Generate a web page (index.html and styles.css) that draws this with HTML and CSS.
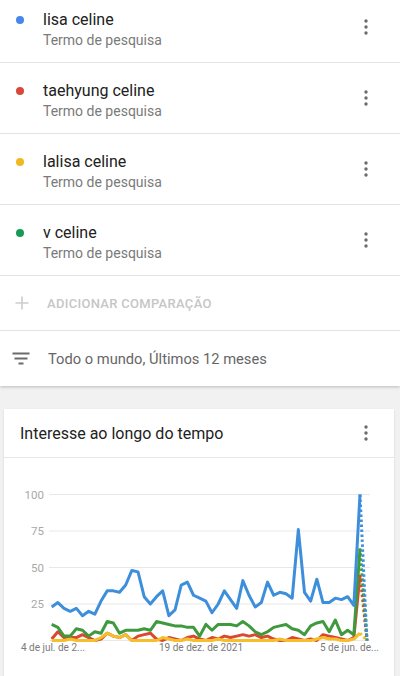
FILE: index.html
```html
<!DOCTYPE html>
<html lang="pt">
<head>
    <meta charset="UTF-8">
    <meta name="viewport" content="width=device-width, initial-scale=1.0">
    <title>Interesse ao longo do tempo</title>
    <link rel="stylesheet" href="styles.css">
</head>
<body>
    <div class="terms">
        <div class="term">
            <span class="dot dot-blue"></span>
            <div class="term-text">
                <div class="term-title">lisa celine</div>
                <div class="term-sub">Termo de pesquisa</div>
            </div>
            <svg class="kebab" width="24" height="24" viewBox="0 0 24 24"><circle cx="12" cy="6" r="1.7"/><circle cx="12" cy="12" r="1.7"/><circle cx="12" cy="18" r="1.7"/></svg>
        </div>
        <div class="term">
            <span class="dot dot-red"></span>
            <div class="term-text">
                <div class="term-title">taehyung celine</div>
                <div class="term-sub">Termo de pesquisa</div>
            </div>
            <svg class="kebab" width="24" height="24" viewBox="0 0 24 24"><circle cx="12" cy="6" r="1.7"/><circle cx="12" cy="12" r="1.7"/><circle cx="12" cy="18" r="1.7"/></svg>
        </div>
        <div class="term">
            <span class="dot dot-yellow"></span>
            <div class="term-text">
                <div class="term-title">lalisa celine</div>
                <div class="term-sub">Termo de pesquisa</div>
            </div>
            <svg class="kebab" width="24" height="24" viewBox="0 0 24 24"><circle cx="12" cy="6" r="1.7"/><circle cx="12" cy="12" r="1.7"/><circle cx="12" cy="18" r="1.7"/></svg>
        </div>
        <div class="term">
            <span class="dot dot-green"></span>
            <div class="term-text">
                <div class="term-title">v celine</div>
                <div class="term-sub">Termo de pesquisa</div>
            </div>
            <svg class="kebab" width="24" height="24" viewBox="0 0 24 24"><circle cx="12" cy="6" r="1.7"/><circle cx="12" cy="12" r="1.7"/><circle cx="12" cy="18" r="1.7"/></svg>
        </div>

        <div class="add-row">
            <svg class="plus" width="14" height="14" viewBox="0 0 14 14"><path d="M7 0.5v13M0.5 7h13"/></svg>
            <span>Adicionar comparação</span>
        </div>

        <div class="filter-row">
            <svg class="filter" width="18" height="13" viewBox="0 0 18 13"><path d="M0.5 1.5h17M2.5 6.5h13M6.5 11.5h5"/></svg>
            <span>Todo o mundo, Últimos 12 meses</span>
        </div>
    </div>

    <div class="card">
        <div class="card-head">
            <span>Interesse ao longo do tempo</span>
            <svg class="kebab" width="24" height="24" viewBox="0 0 24 24"><circle cx="12" cy="6" r="1.7"/><circle cx="12" cy="12" r="1.7"/><circle cx="12" cy="18" r="1.7"/></svg>
        </div>
        <!-- chart: x = week index, y = interest (0-100) -->
        <svg class="chart" width="390" height="220" viewBox="0 0 390 220">
            <g class="grid">
                <line x1="45" y1="36.5" x2="366" y2="36.5"/>
                <line x1="45" y1="73" x2="366" y2="73"/>
                <line x1="45" y1="109.5" x2="366" y2="109.5"/>
                <line x1="45" y1="146" x2="366" y2="146"/>
                <line x1="45" y1="182.5" x2="366" y2="182.5"/>
            </g>
            <g class="y-labels">
                <text x="40" y="40.5">100</text>
                <text x="40" y="77">75</text>
                <text x="40" y="113.5">50</text>
                <text x="40" y="150">25</text>
            </g>
            <g transform="translate(47.7 182.5) scale(6.166 -1.46)">
                <polyline class="line line-red" points="0,1 1,6 2,2 3,2 4,2 5,4 6,2 7,0 8,1 9,5 10,3 11,2 12,4 13,0 14,3 15,4 16,5 17,1 18,0 19,2 20,1 21,0 22,2 23,3 24,1 25,0 26,2 27,1 28,3 29,2 30,3 31,4 32,3 33,4 34,2 35,3 36,1 37,0 38,0 39,2 40,1 41,0 42,1 43,0 44,4 45,3 46,2 47,1 48,0 49,2 50,45"/>
                <polyline class="line line-yellow" points="0,0 1,0 2,0 3,1 4,0 5,0 6,0 7,0 8,2 9,5 10,3 11,2 12,4 13,0 14,0 15,0 16,0 17,0 18,2 19,1 20,0 21,0 22,1 23,0 24,0 25,0 26,0 27,1 28,0 29,0 30,0 31,0 32,0 33,0 34,0 35,0 36,0 37,1 38,0 39,0 40,0 41,0 42,0 43,1 44,2 45,1 46,1 47,0 48,0 49,1 50,5"/>
                <polyline class="line line-green" points="0,11 1,9 2,3 3,3 4,8 5,7 6,3 7,6 8,5 9,13 10,12 11,5 12,7 13,7 14,7 15,8 16,7 17,13 18,12 19,11 20,10 21,10 22,9 23,9 24,3 25,11 26,7 27,11 28,11 29,11 30,10 31,13 32,10 33,6 34,4 35,6 36,9 37,10 38,11 39,8 40,7 41,4 42,10 43,12 44,13 45,6 46,14 47,4 48,7 49,4 50,63"/>
                <polyline class="line line-blue" points="0,23 1,26 2,22 3,20 4,22 5,17 6,20 7,18 8,27 9,34 10,34 11,33 12,38 13,48 14,47 15,30 16,25 17,30 18,34 19,17 20,21 21,38 22,40 23,31 24,29 25,27 26,19 27,25 28,34 29,28 30,22 31,41 32,31 33,23 34,26 35,40 36,31 37,33 38,32 39,29 40,76 41,33 42,27 43,42 44,26 45,26 46,29 47,28 48,30 49,24 50,100"/>
            </g>
            <g class="partial">
                <line class="dash-yellow" x1="356" y1="175.2" x2="363" y2="182.5"/>
                <line class="dash-red" x1="356" y1="116.8" x2="363" y2="182.5"/>
                <line class="dash-green" x1="356" y1="90.5" x2="363" y2="182.5"/>
                <line class="dash-blue" x1="356" y1="36.5" x2="363" y2="182.5"/>
            </g>
            <g class="x-labels">
                <text x="17" y="192.5">4 de jul. de 2...</text>
                <text x="155" y="192.5">19 de dez. de 2021</text>
                <text x="316" y="192.5">5 de jun. de...</text>
            </g>
        </svg>
    </div>
</body>
</html>
```
FILE: styles.css
```css
body {
    margin: 0;
    font-family: Roboto, "Noto Sans", Arial, sans-serif;
    background-color: #f1f1f1;
    overflow: hidden;
}

.terms {
    margin-top: -8px;
    background-color: #fff;
    box-shadow: 0 1px 3px rgba(0, 0, 0, 0.22);
}

.term {
    display: flex;
    height: 70px;
    border-bottom: 1px solid #e3e3e3;
}

.dot {
    flex: none;
    width: 8px;
    height: 8px;
    margin: 24px 19px 0 16px;
    border-radius: 50%;
}

.dot-blue { background-color: #4687ea; }
.dot-red { background-color: #d9483a; }
.dot-yellow { background-color: #f3b821; }
.dot-green { background-color: #169b56; }

.term-text {
    padding-top: 18px;
}

.term-title {
    font-size: 16px;
    line-height: 20px;
    color: #212121;
}

.term-sub {
    font-size: 14px;
    line-height: 20px;
    color: #7a7a7a;
}

.kebab {
    flex: none;
    fill: #6b6b6b;
}

.term .kebab {
    align-self: center;
    margin: 0 22px 0 auto;
}

.add-row {
    display: flex;
    align-items: center;
    height: 54px;
    padding-left: 15px;
    border-bottom: 1px solid #e3e3e3;
    font-size: 13px;
    font-weight: 500;
    letter-spacing: 0.3px;
    text-transform: uppercase;
    color: #c6c6c6;
}

.plus {
    margin-right: 18px;
    stroke: #cdcdcd;
    stroke-width: 1.6;
    fill: none;
}

.filter-row {
    display: flex;
    align-items: center;
    height: 55px;
    padding-left: 12px;
    font-size: 14.7px;
    color: #666;
}

.filter {
    margin-right: 18px;
    stroke: #6b6b6b;
    stroke-width: 2;
    fill: none;
}

.card {
    width: 390px;
    margin: 23px 0 0 4px;
    background-color: #fff;
    box-shadow: 0 1px 2px rgba(0, 0, 0, 0.12);
}

.card-head {
    display: flex;
    align-items: center;
    justify-content: space-between;
    height: 48px;
    padding: 0 16px;
    border-bottom: 1px solid #e6e6e6;
    font-size: 16px;
    color: #222;
}

.chart {
    display: block;
}

.grid line {
    stroke: #e8e8e8;
    stroke-width: 1;
}

.y-labels text {
    font-size: 11.5px;
    fill: #a8a8a8;
    text-anchor: end;
}

.x-labels text {
    font-size: 10px;
    fill: #7a7a7a;
}

.line {
    fill: none;
    stroke-width: 3;
    stroke-linejoin: round;
    vector-effect: non-scaling-stroke;
}

.line-blue { stroke: #3d8fdb; }
.line-red { stroke: #d9482f; }
.line-yellow { stroke: #f4bf2a; }
.line-green { stroke: #3f9a3f; }

.partial line {
    stroke-width: 3;
    stroke-dasharray: 2.5 2.5;
}

.dash-blue { stroke: #3d8fdb; }
.dash-red { stroke: #d9482f; }
.dash-yellow { stroke: #f4bf2a; }
.dash-green { stroke: #3f9a3f; }
```
